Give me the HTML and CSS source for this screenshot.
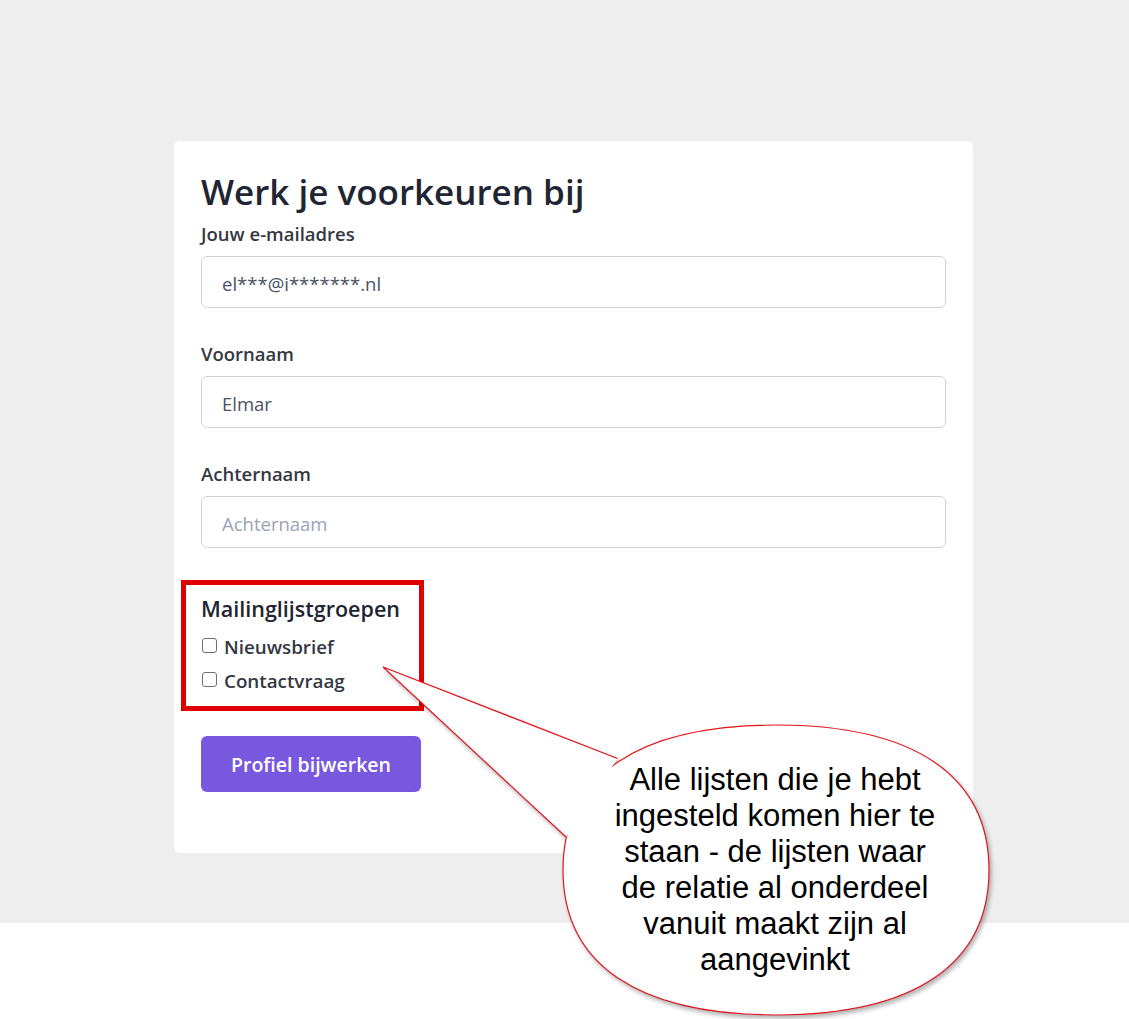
FILE: index.html
```html
<!DOCTYPE html>
<html lang="nl">
<head>
<meta charset="utf-8">
<title>Werk je voorkeuren bij</title>
<link rel="stylesheet" href="styles.css">
</head>
<body>
<div class="page">
  <form class="card">
    <h1 class="title">Werk je voorkeuren bij</h1>
    <div class="group">
      <label class="label" for="email">Jouw e-mailadres</label>
      <input class="input" id="email" type="text" value="el***@i*******.nl">
    </div>
    <div class="group">
      <label class="label" for="first">Voornaam</label>
      <input class="input" id="first" type="text" value="Elmar">
    </div>
    <div class="group">
      <label class="label" for="last">Achternaam</label>
      <input class="input" id="last" type="text" placeholder="Achternaam">
    </div>
    <div class="lists">
      <div class="lists-title">Mailinglijstgroepen</div>
      <label class="check-row"><input type="checkbox" class="check"><span>Nieuwsbrief</span></label>
      <label class="check-row"><input type="checkbox" class="check"><span>Contactvraag</span></label>
    </div>
    <button type="button" class="btn">Profiel bijwerken</button>
  </form>
</div>

<svg class="callout" width="1129" height="1019" viewBox="0 0 1129 1019" aria-hidden="true">
  <g class="callout-shape">
    <path d="M 989 870 C 989 964.25, 914.45 1015, 776 1015 C 637.55 1015, 563 964.25, 563 870 C 563 775.75, 637.55 725, 776 725 C 914.45 725, 989 775.75, 989 870 Z" fill="#ffffff" stroke="#e3141b" stroke-width="1.2"/>
    <polygon points="383,667 617.5,758.5 566,837" fill="#ffffff"/>
    <polyline points="617.5,758.5 383,667 566,837" fill="none" stroke="#e3141b" stroke-width="1.2"/>
  </g>
</svg>
<div class="callout-text">Alle lijsten die je hebt<br>ingesteld komen hier te<br>staan - de lijsten waar<br>de relatie al onderdeel<br>vanuit maakt zijn al<br>aangevinkt</div>
</body>
</html>
```

FILE: styles.css
```css
html, body {
  margin: 0;
  padding: 0;
}

body {
  position: relative;
  background: #ffffff;
  font-family: "Open Sans", "Noto Sans", sans-serif;
  min-height: 1019px;
}

.page {
  box-sizing: border-box;
  height: 923px;
  background: #eeeeee;
  padding: 141px 0 0 174px;
}

.card {
  box-sizing: border-box;
  width: 799px;
  height: 712px;
  background: #ffffff;
  border-radius: 6px;
  padding: 29px 27px 60px 27px;
}

.title {
  margin: 0 0 7px 0;
  font-size: 35px;
  line-height: 43px;
  font-weight: 600;
  color: #1f2532;
}

.group {
  margin-bottom: 32px;
}

.label {
  display: block;
  font-size: 18.5px;
  line-height: 27px;
  font-weight: 600;
  color: #343842;
  margin-bottom: 9px;
}

.input {
  box-sizing: border-box;
  display: block;
  width: 745px;
  height: 52px;
  border: 1px solid #cfd3d9;
  border-radius: 6px;
  padding: 3px 20px 0 20px;
  font-family: "Open Sans", "Noto Sans", sans-serif;
  font-size: 18.5px;
  color: #4a5262;
  background: #ffffff;
  outline: none;
}

.input::placeholder {
  color: #9aa3b5;
}

.lists {
  box-sizing: border-box;
  width: 243px;
  margin: 1px 0 0 -20px;
  border: 5px solid #e00000;
  padding: 11px 10px 8px 15px;
}

.lists-title {
  font-size: 21.5px;
  line-height: 26px;
  font-weight: 600;
  color: #1f2532;
  margin-bottom: 8px;
}

.check-row {
  display: flex;
  align-items: center;
  height: 34px;
  font-size: 18.8px;
  font-weight: 600;
  color: #343842;
}

.check {
  appearance: none;
  -webkit-appearance: none;
  box-sizing: border-box;
  flex: none;
  width: 15px;
  height: 15px;
  margin: 0 7px 4px 1px;
  border: 1px solid #6f6f6f;
  border-radius: 3px;
  background: #ffffff;
}

.btn {
  margin-top: 25px;
  height: 56px;
  width: 220px;
  border: none;
  border-radius: 6px;
  background: #7858df;
  color: #ffffff;
  font-family: "Open Sans", "Noto Sans", sans-serif;
  font-size: 19.5px;
  font-weight: 600;
  padding: 0;
}

.callout {
  position: absolute;
  top: 0;
  left: 0;
  pointer-events: none;
}

.callout-shape {
  filter: drop-shadow(2px 3px 2px rgba(0, 0, 0, 0.3));
}

.callout-text {
  position: absolute;
  top: 762px;
  left: 575px;
  width: 400px;
  text-align: center;
  white-space: nowrap;
  font-family: "Liberation Sans", Arial, sans-serif;
  font-size: 31px;
  line-height: 36px;
  color: #000000;
}
```
